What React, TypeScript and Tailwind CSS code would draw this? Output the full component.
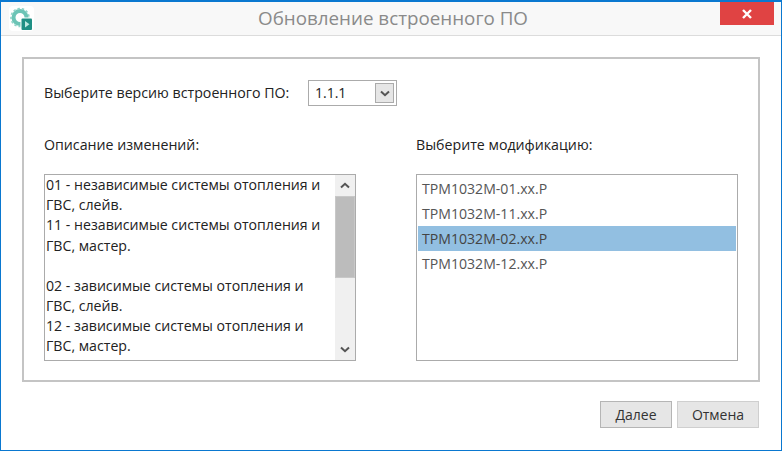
const mods = ["ТРМ1032М-01.хх.Р", "ТРМ1032М-11.хх.Р", "ТРМ1032М-02.хх.Р", "ТРМ1032М-12.хх.Р"];

function Chevron({ down }: { down?: boolean }) {
  return (
    <svg width="10" height="7" viewBox="0 0 10 7" className={down ? "" : "rotate-180"}>
      <path d="M1 1.5 L5 5.2 L9 1.5" fill="none" stroke="#555" strokeWidth="2" />
    </svg>
  );
}

export default function App() {
  return (
    <div className="w-[782px] h-[451px] flex flex-col bg-white border border-t-2 border-[#0a78d0] overflow-hidden font-['Open_Sans','Noto_Sans',sans-serif] text-[#222]">
      <div className="h-[34px] shrink-0 flex items-start bg-[#f8f8f8] border-b border-[#dcdcdc]">
        <div className="w-[25px] h-[25px] ml-[8px] mt-[4px] shrink-0 bg-white rounded-[4px]">
          <svg width="25" height="25" viewBox="0 0 25 25">
            <circle cx="11" cy="11.5" r="6.5" fill="none" stroke="#6cc4b6" strokeWidth="4" />
            <circle cx="11" cy="11.5" r="9" fill="none" stroke="#8fd3c8" strokeWidth="1.6" strokeDasharray="2.4 2" />
            <rect x="11.5" y="11.5" width="12" height="13" rx="1" fill="#fff" />
            <rect x="12.5" y="12.5" width="10.5" height="11.5" rx="1" fill="#1f8f84" />
            <path d="M16 15 L20.5 18.2 L16 21.4 Z" fill="#bfe8e1" />
          </svg>
        </div>
        <div className="flex-1 h-[32px] flex items-center justify-center pl-[32px] text-[18.8px] text-[#8a8a8a]">Обновление встроенного ПО</div>
        <div className="w-[54px] h-[23px] mr-[7px] bg-[#e04343] flex items-center justify-center">
          <svg width="10" height="10" viewBox="0 0 10 10">
            <path d="M1 1 L9 9 M9 1 L1 9" stroke="#fff" strokeWidth="2.4" />
          </svg>
        </div>
      </div>

      <div className="flex-1 flex flex-col px-[21px] pt-[21px]">
        <div className="h-[325px] border-2 border-[#c4c4c4] px-[20px] pt-[20px] flex flex-col text-[14.2px] leading-[20px]">
          <div className="flex items-center h-[28px]">
            <span className="w-[264px]">Выберите версию встроенного ПО:</span>
            <div className="w-[89px] h-[26px] border border-[#ababab] flex items-center justify-between pl-[6px] pr-[2px] text-[14px]">
              <span>1.1.1</span>
              <div className="w-[19px] h-[20px] bg-[#e6e6e6] border border-[#ababab] flex items-center justify-center">
                <Chevron down />
              </div>
            </div>
          </div>

          <div className="flex mt-[28px] flex-1">
            <div className="w-[372px] flex flex-col">
              <div className="h-[20px]">Описание изменений:</div>
              <div className="mt-[19px] w-[312px] h-[187px] border border-[#ababab] flex overflow-hidden">
                <div className="w-[290px] pl-[1px] pr-[5px] leading-[20.2px] text-[14.15px]">
                  <div>01 - независимые системы отопления и ГВС, слейв.</div>
                  <div>11 - независимые системы отопления и ГВС, мастер.</div>
                  <div className="mt-[20px]">02 - зависимые системы отопления и ГВС, слейв.</div>
                  <div>12 - зависимые системы отопления и ГВС, мастер.</div>
                </div>
                <div className="flex-1 bg-[#f0f0f0] flex flex-col items-center">
                  <div className="h-[21px] flex items-center"><Chevron /></div>
                  <div className="w-full h-[82px] bg-[#bcbcbc] border border-[#c8c8c8]" />
                  <div className="flex-1" />
                  <div className="h-[21px] flex items-center"><Chevron down /></div>
                </div>
              </div>
            </div>
            <div className="w-[322px] flex flex-col">
              <div className="h-[20px]">Выберите модификацию:</div>
              <div className="mt-[19px] h-[187px] border border-[#ababab] pt-[1px] px-[1px] text-[14.1px] text-[#555]">
                {mods.map((m, i) => (
                  <div key={m} className={`h-[25px] flex items-center pl-[4px] ${i === 2 ? "bg-[#92bfe1] text-[#444]" : ""}`}>{m}</div>
                ))}
              </div>
            </div>
          </div>
        </div>

        <div className="flex justify-end gap-[5px] mt-[19px] mr-[1px] text-[14px]">
          <button className="w-[72px] h-[27px] bg-[#e6e6e6] border border-[#b5b5b5] text-[#333]">Далее</button>
          <button className="w-[82px] h-[27px] bg-[#e6e6e6] border border-[#cfcfcf] text-[#333]">Отмена</button>
        </div>
      </div>
    </div>
  );
}
